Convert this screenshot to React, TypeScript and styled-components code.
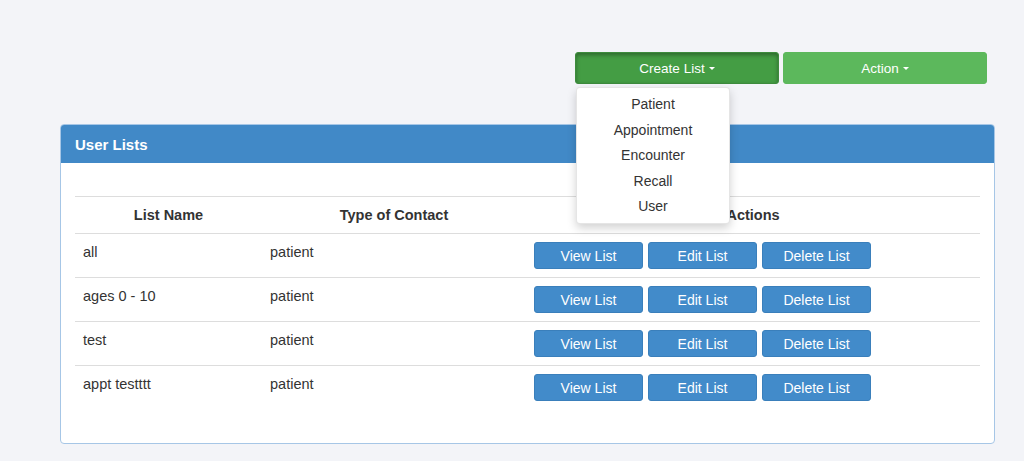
import React from "react";
import styled, { createGlobalStyle } from "styled-components";

const GlobalStyle = createGlobalStyle`
  html, body {
    margin: 0;
    padding: 0;
    background: #f3f4f8;
    font-family: "Liberation Sans", Arial, sans-serif;
    color: #333;
  }
`;

const Page = styled.div`
  width: 1024px;
  height: 461px;
  padding: 52px 29px 0 60px;
  box-sizing: border-box;
  overflow: hidden;
`;

const Toolbar = styled.div`
  display: flex;
  justify-content: flex-end;
  gap: 4px;
  margin-right: 8px;
`;

const DropWrap = styled.div`
  position: relative;
`;

const GreenButton = styled.button<{ $active?: boolean }>`
  width: 204px;
  height: 32px;
  border: 1px solid ${(p) => (p.$active ? "#3d8b3d" : "#5cb85c")};
  border-radius: 3px;
  background: ${(p) => (p.$active ? "#449d44" : "#5cb85c")};
  box-shadow: ${(p) => (p.$active ? "inset 0 2px 4px rgba(0,0,0,0.35)" : "none")};
  color: #fff;
  font-family: "Liberation Sans", Arial, sans-serif;
  font-size: 13.5px;
  display: flex;
  align-items: center;
  justify-content: center;
  gap: 4px;
  padding: 0;
`;

const Caret = styled.span`
  display: inline-block;
  width: 0;
  height: 0;
  border-left: 3px solid transparent;
  border-right: 3px solid transparent;
  border-top: 3px solid #fff;
  margin-top: 1px;
`;

const Menu = styled.ul`
  position: absolute;
  top: 35px;
  left: 1px;
  width: 154px;
  margin: 0;
  padding: 4px 0 3px;
  list-style: none;
  background: #fff;
  border-radius: 4px;
  border: 1px solid rgba(0, 0, 0, 0.1);
  box-shadow: 0 4px 10px rgba(0, 0, 0, 0.18);
  box-sizing: border-box;
  z-index: 10;
`;

const MenuItem = styled.li`
  text-align: center;
  font-size: 14px;
  line-height: 25.5px;
  color: #333;
`;

const Panel = styled.div`
  margin-top: 40px;
  width: 935px;
  height: 320px;
  box-sizing: border-box;
  background: #fff;
  border: 1px solid #a6c6e6;
  border-radius: 4px;
  overflow: hidden;
`;

const PanelHeading = styled.div`
  height: 38px;
  background: #4189c7;
  color: #fff;
  font-weight: bold;
  font-size: 15px;
  display: flex;
  align-items: center;
  padding-left: 14px;
`;

const PanelBody = styled.div`
  padding: 33px 14px 0 14px;
`;

const Table = styled.table`
  width: 905px;
  border-collapse: collapse;
  font-size: 14.5px;
`;

const Th = styled.th<{ $w?: number }>`
  width: ${(p) => (p.$w ? `${p.$w}px` : "auto")};
  text-align: center;
  font-weight: bold;
  height: 37px;
  padding: 0 8px;
  border-top: 1px solid #ddd;
  border-bottom: 1px solid #ddd;
  box-sizing: border-box;
`;

const Td = styled.td`
  height: 44px;
  padding: 8px 8px 0;
  vertical-align: top;
  border-bottom: 1px solid #ddd;
  box-sizing: border-box;
  line-height: 20px;
`;

const LastRow = styled.tr`
  & > td {
    border-bottom: none;
  }
`;

const Actions = styled.div`
  display: flex;
  gap: 5px;
`;

const BlueButton = styled.button`
  width: 109px;
  height: 27px;
  background: #428bca;
  border: 1px solid #3a7fbb;
  border-radius: 3px;
  color: #fff;
  font-family: "Liberation Sans", Arial, sans-serif;
  font-size: 14px;
  padding: 0;
`;

const rows = [
  { name: "all", type: "patient" },
  { name: "ages 0 - 10", type: "patient" },
  { name: "test", type: "patient" },
  { name: "appt testttt", type: "patient" },
];

const menu = ["Patient", "Appointment", "Encounter", "Recall", "User"];

export default function App() {
  return (
    <Page>
      <GlobalStyle />
      <Toolbar>
        <DropWrap>
          <GreenButton $active>
            Create List <Caret />
          </GreenButton>
          <Menu>
            {menu.map((m) => (
              <MenuItem key={m}>{m}</MenuItem>
            ))}
          </Menu>
        </DropWrap>
        <GreenButton>
          Action <Caret />
        </GreenButton>
      </Toolbar>
      <Panel>
        <PanelHeading>User Lists</PanelHeading>
        <PanelBody>
          <Table>
            <thead>
              <tr>
                <Th $w={187}>List Name</Th>
                <Th $w={264}>Type of Contact</Th>
                <Th>Actions</Th>
              </tr>
            </thead>
            <tbody>
              {rows.map((r, i) => {
                const cells = (
                  <>
                    <Td>{r.name}</Td>
                    <Td>{r.type}</Td>
                    <Td>
                      <Actions>
                        <BlueButton>View List</BlueButton>
                        <BlueButton>Edit List</BlueButton>
                        <BlueButton>Delete List</BlueButton>
                      </Actions>
                    </Td>
                  </>
                );
                return i === rows.length - 1 ? (
                  <LastRow key={r.name}>{cells}</LastRow>
                ) : (
                  <tr key={r.name}>{cells}</tr>
                );
              })}
            </tbody>
          </Table>
        </PanelBody>
      </Panel>
    </Page>
  );
}
